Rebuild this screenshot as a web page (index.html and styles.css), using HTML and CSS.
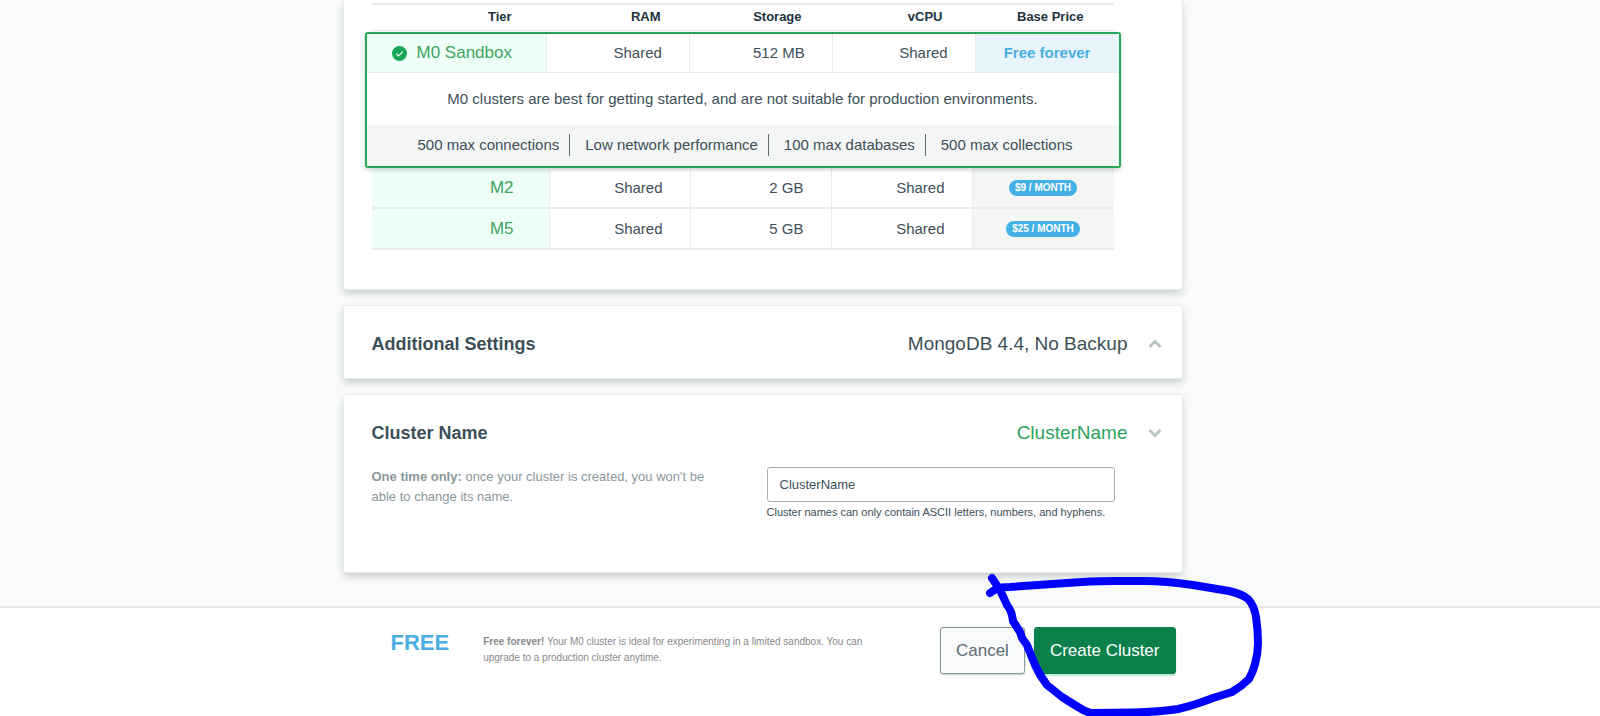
FILE: index.html
```html
<!DOCTYPE html>
<html lang="en">
<head>
<meta charset="utf-8">
<title>Create Cluster</title>
<link rel="stylesheet" href="styles.css">
</head>
<body>
<main class="main">
  <section class="card card-tiers">
    <table class="tiers">
      <thead>
        <tr><th>Tier</th><th>RAM</th><th>Storage</th><th>vCPU</th><th>Base Price</th></tr>
      </thead>
      <tbody class="selected">
        <tr>
          <td class="tier">
            <svg class="check" viewBox="0 0 16 16" aria-hidden="true"><circle cx="8" cy="8" r="8"/><path d="M4.5 8.2l2.4 2.3 4.6-4.6"/></svg>
            M0 Sandbox
          </td>
          <td>Shared</td><td>512 MB</td><td>Shared</td>
          <td class="price">Free forever</td>
        </tr>
        <tr class="note"><td colspan="5">M0 clusters are best for getting started, and are not suitable for production environments.</td></tr>
        <tr class="limits">
          <td colspan="5">
            <ul class="limit-list">
              <li>500 max connections</li>
              <li>Low network performance</li>
              <li>100 max databases</li>
              <li>500 max collections</li>
            </ul>
          </td>
        </tr>
      </tbody>
      <tbody class="others">
        <tr><td class="tier">M2</td><td>Shared</td><td>2 GB</td><td>Shared</td><td class="price"><span class="badge">$9 / MONTH</span></td></tr>
        <tr><td class="tier">M5</td><td>Shared</td><td>5 GB</td><td>Shared</td><td class="price"><span class="badge">$25 / MONTH</span></td></tr>
      </tbody>
    </table>
  </section>

  <section class="card">
    <header class="card-head">
      <h2 class="title">Additional Settings</h2>
      <span class="summary">MongoDB 4.4, No Backup</span>
      <button class="toggle" type="button" aria-label="Expand additional settings"><svg class="chevron" viewBox="0 0 14 10"><path d="M1.5 8L7 2.5 12.5 8"/></svg></button>
    </header>
  </section>

  <section class="card">
    <header class="card-head">
      <h2 class="title">Cluster Name</h2>
      <span class="summary summary-set">ClusterName</span>
      <button class="toggle" type="button" aria-label="Collapse cluster name"><svg class="chevron" viewBox="0 0 14 10"><path d="M1.5 2L7 7.5 12.5 2"/></svg></button>
    </header>
    <div class="name-form">
      <label class="hint" for="cluster-name"><strong>One time only:</strong> once your cluster is created, you won't be able to change its name.</label>
      <div class="field">
        <input class="name-input" id="cluster-name" type="text" value="ClusterName" aria-describedby="name-rule">
        <p class="rule" id="name-rule">Cluster names can only contain ASCII letters, numbers, and hyphens.</p>
      </div>
    </div>
  </section>
</main>

<footer class="footer">
  <div class="footer-inner">
    <strong class="free">FREE</strong>
    <p class="blurb"><strong>Free forever!</strong> Your M0 cluster is ideal for experimenting in a limited sandbox. You can upgrade to a production cluster anytime.</p>
    <div class="actions">
      <button class="btn" type="button">Cancel</button>
      <button class="btn btn-primary" type="button">Create Cluster</button>
      <svg class="marker" viewBox="985 570 280 146" aria-hidden="true"><path d="M992 578L1000 590L1007 605Q1012 611 1013 621L1020 632L1022 638L1027 645L1035 665Q1040 676 1047 685L1062 697L1078 707Q1086 712 1091 713L1133 712.500Q1160 712 1178 709Q1192 706 1213 698L1232 692Q1242 686 1249 679Q1253 672 1255 664Q1258 654 1258 643Q1258 630 1256 617Q1254 605 1248 599Q1242 594 1229 591L1193 585Q1165 581 1145 581L1113 581Q1090 581 1067 583L1010 587Q999 587 996 589L990 593"/></svg>
    </div>
  </div>
</footer>
</body>
</html>
```
FILE: styles.css
```css
* { box-sizing: border-box; }

body {
  margin: 0;
  min-height: 100vh;
  display: flex;
  flex-direction: column;
  background: #f9fbfa;
  color: #3d4f58;
  font-family: "Liberation Sans", Arial, sans-serif;
  font-size: 15px;
}

h2, p, ul { margin: 0; padding: 0; }
button, input { font-family: inherit; }

.main {
  display: flex;
  flex-direction: column;
  align-items: center;
  gap: 15px;
  padding: 0 75px 33px 0;
}

.card {
  width: 100%;
  max-width: 840px;
  background: #fff;
  border: 1px solid #e7eeec;
  border-radius: 3px;
  box-shadow: 0 4px 8px -1px rgba(6, 22, 33, 0.22);
}

.card-tiers {
  padding: 3px 68px 39px 28px;
  border-top: 0;
  border-radius: 0 0 3px 3px;
}

/* tier table */
.tiers, .tiers thead, .tiers tbody { display: block; }
.tiers thead {
  padding-bottom: 2px;
  border-top: 2px solid #e9ebeb;
  border-bottom: 1px solid #e9ebeb;
}

.tiers tr {
  display: grid;
  grid-template-columns: 24% repeat(4, 1fr);
}

.tiers th {
  padding: 0 30px 0 0;
  color: #21313c;
  font-size: 13px;
  line-height: 23px;
  text-align: right;
}
.tiers th:first-child { padding-right: 38px; }

.tiers td {
  padding: 0 27px 0 0;
  border-right: 1px solid #e9ebeb;
  line-height: 38px;
  text-align: right;
}

.tiers .tier {
  padding-right: 34px;
  background: #edfff6;
  color: #41a35f;
  font-size: 17px;
}

.tiers .price {
  padding: 0;
  border-right: 0;
  background: #f3f6f5;
  text-align: center;
}

.tiers .selected {
  position: relative;
  margin: 1px -7px 0;
  border: 2px solid #27a65a;
  border-radius: 3px;
  background: #fff;
  box-shadow: 0 2px 4px rgba(6, 22, 33, 0.2);
}
.selected tr { border-bottom: 1px solid #e9ebeb; }
.tiers .selected .price {
  background: #e7f4fb;
  color: #4cafe1;
  font-weight: bold;
}

.check {
  width: 15px;
  height: 15px;
  margin-right: 5px;
  vertical-align: -3px;
}
.check circle { fill: #17a657; }
.check path { fill: none; stroke: #fff; stroke-width: 1.2; }

.tiers .note, .tiers .limits { display: block; border: 0; }
.note td, .limits td { display: block; }
.tiers .note td {
  padding: 0;
  border: 0;
  line-height: 52px;
  text-align: center;
}
.tiers .limits td {
  padding: 9px 0 10px;
  border: 0;
  background: #f3f6f5;
}

.limit-list {
  display: flex;
  justify-content: center;
  list-style: none;
}
.limit-list li {
  padding: 0 10px 0 15px;
  border-right: 1px solid #5d6c74;
  line-height: 22px;
}
.limit-list li:last-child { border: 0; }

.others tr { border-bottom: 2px solid #e9ebeb; }
.tiers .others td { line-height: 39px; }
.tiers .others .tier { padding-right: 35px; }

.badge {
  display: inline-block;
  padding: 0 6px;
  border-radius: 8px;
  background: #43b1e5;
  color: #fff;
  font-size: 10px;
  font-weight: bold;
  line-height: 16px;
  vertical-align: 2px;
}

/* collapsible cards */
.card-head {
  display: flex;
  align-items: center;
  padding: 26px 20px 22px 28px;
  line-height: 24px;
}
.title { flex: 1; font-size: 18px; }
.summary { font-size: 19px; }
.summary-set { color: #2da35c; }

.toggle {
  display: flex;
  margin-left: 20px;
  padding: 0;
  border: 0;
  background: none;
}
.chevron { width: 14px; height: 10px; }
.chevron path { fill: none; stroke: #b8c4c2; stroke-width: 3; }

.name-form {
  display: grid;
  grid-template-columns: 1fr 348px;
  padding: 0 67px 52px 28px;
}
.hint {
  max-width: 340px;
  color: #89979b;
  font-size: 13px;
  line-height: 20px;
}
.name-input {
  display: block;
  width: 100%;
  height: 35px;
  padding: 0 12px;
  border: 1px solid #a3b0b3;
  border-radius: 3px;
  background: #fff;
  color: #3d4f58;
  font-size: 13px;
}
.rule { margin-top: 2px; font-size: 11px; line-height: 16px; }

/* action bar */
.footer {
  flex: 1;
  padding-right: 75px;
  border-top: 2px solid #e7e9e8;
  background: #fff;
}
.footer-inner {
  display: flex;
  align-items: flex-start;
  max-width: 840px;
  margin: 0 auto;
  padding: 19px 7px 0 48px;
}
.free { color: #4cafe1; font-size: 22px; line-height: 32px; }
.blurb {
  width: 390px;
  margin: 7px auto 0 34px;
  color: #89898b;
  font-size: 10px;
  line-height: 16px;
}

.actions { position: relative; display: flex; gap: 9px; }
.btn {
  height: 47px;
  padding: 0 15px;
  border: 1px solid #89979b;
  border-radius: 3px;
  background: #f9fbfa;
  box-shadow: 0 1px 2px rgba(6, 22, 33, 0.25);
  color: #5d6c74;
  font-size: 17px;
  white-space: nowrap;
}
.btn-primary {
  border-color: #0b804b;
  background: #0b804b;
  box-shadow: 0 2px 2px #c3e7ca;
  color: #fff;
}

/* hand-drawn highlight around the primary action */
.marker {
  position: absolute;
  right: -89px;
  bottom: -42px;
  width: 280px;
  height: 146px;
  pointer-events: none;
}
.marker path {
  fill: none;
  stroke: #00f;
  stroke-width: 8;
  stroke-linecap: round;
  stroke-linejoin: round;
}
```
